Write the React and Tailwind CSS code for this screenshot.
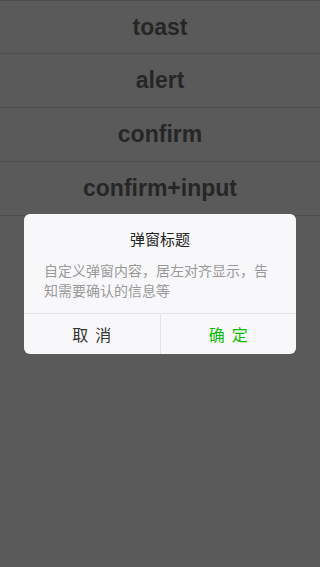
export default function App() {
  const rows = ["toast", "alert", "confirm", "confirm+input"];
  return (
    <div className="relative w-[320px] h-[567px] bg-[#5a5a5b] overflow-hidden" style={{ fontFamily: '"Liberation Sans", Arial, sans-serif' }}>
      <div className="flex flex-col">
        {rows.map((r, i) => (
          <div
            key={r}
            className={`h-[54px] flex items-center justify-center border-b border-[#4e4e4f] text-[23px] font-bold text-[#262626] ${i === 0 ? "border-t" : ""}`}
          >
            {r}
          </div>
        ))}
      </div>
      <div
        className="absolute left-[24px] top-[214px] w-[272px] h-[140px] bg-[#f8f8fa] rounded-[6px] flex flex-col overflow-hidden"
        style={{ fontFamily: '"Noto Sans CJK SC", "Noto Sans", sans-serif' }}
      >
        <div className="pt-[14px] text-center text-[15px] leading-[22px] text-[#222]">弹窗标题</div>
        <div className="mt-[10px] px-[20px] text-[14px] leading-[20px] text-[#999] flex-1">
          自定义弹窗内容，居左对齐显示，告知需要确认的信息等
        </div>
        <div className="h-[41px] border-t border-[#e5e5e5] flex text-[16px]">
          <div className="flex-1 flex items-center justify-center gap-[7px] text-[#333] border-r border-[#e5e5e5]">
            <span>取</span>
            <span>消</span>
          </div>
          <div className="flex-1 flex items-center justify-center gap-[7px] text-[#09bb07]">
            <span>确</span>
            <span>定</span>
          </div>
        </div>
      </div>
    </div>
  );
}
